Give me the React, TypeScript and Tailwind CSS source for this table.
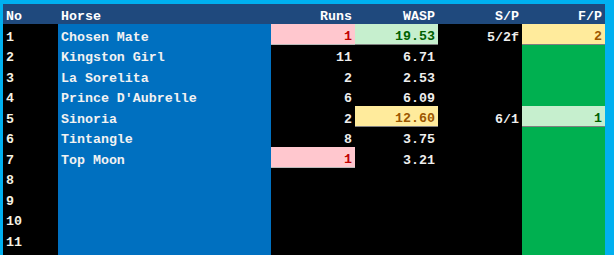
import React from "react";

type Tone = "pink" | "green" | "yellow" | "";

type Row = {
  no: number | "";
  horse: string;
  runs: string;
  runsTone?: Tone;
  wasp: string;
  waspTone?: Tone;
  sp: string;
  fp: string;
  fpTone?: Tone;
};

const rows: Row[] = [
  { no: 1, horse: "Chosen Mate", runs: "1", runsTone: "pink", wasp: "19.53", waspTone: "green", sp: "5/2f", fp: "2", fpTone: "yellow" },
  { no: 2, horse: "Kingston Girl", runs: "11", wasp: "6.71", sp: "", fp: "" },
  { no: 3, horse: "La Sorelita", runs: "2", wasp: "2.53", sp: "", fp: "" },
  { no: 4, horse: "Prince D'Aubrelle", runs: "6", wasp: "6.09", sp: "", fp: "" },
  { no: 5, horse: "Sinoria", runs: "2", wasp: "12.60", waspTone: "yellow", sp: "6/1", fp: "1", fpTone: "green" },
  { no: 6, horse: "Tintangle", runs: "8", wasp: "3.75", sp: "", fp: "" },
  { no: 7, horse: "Top Moon", runs: "1", runsTone: "pink", wasp: "3.21", sp: "", fp: "" },
  { no: 8, horse: "", runs: "", wasp: "", sp: "", fp: "" },
  { no: 9, horse: "", runs: "", wasp: "", sp: "", fp: "" },
  { no: 10, horse: "", runs: "", wasp: "", sp: "", fp: "" },
  { no: 11, horse: "", runs: "", wasp: "", sp: "", fp: "" },
  { no: "", horse: "", runs: "", wasp: "", sp: "", fp: "" },
];

const toneClass = (tone: Tone | undefined, base: string) => {
  if (tone === "pink") return "bg-[#ffc7ce] text-[#c00000] border-b border-[#b9b9b9]";
  if (tone === "green") return "bg-[#c6efce] text-[#006100] border-b border-[#7f7f7f]";
  if (tone === "yellow") return "bg-[#ffeb9c] text-[#9c5700] border-b border-[#7f7f7f]";
  return base;
};

const Cell = ({
  children,
  className,
  right,
}: {
  children?: React.ReactNode;
  className: string;
  right?: boolean;
}) => (
  <div
    className={`h-[20.5px] flex items-center pt-[6px] whitespace-pre ${
      right ? "justify-end pr-[3px]" : "pl-[3px]"
    } ${className}`}
  >
    {children}
  </div>
);

const App = () => {
  return (
    <div
      className="w-[614px] h-[255px] overflow-hidden bg-[#00b0f0] pt-[4px] pl-[3px] pr-[9px] text-[13.3px] font-bold leading-none"
      style={{ fontFamily: '"Liberation Mono", "Courier New", monospace' }}
    >
      <div className="grid grid-cols-[55px_213px_84px_83px_84px_83px]">
        <Cell className="h-[20px] bg-[#1f497d] text-white">No</Cell>
        <Cell className="h-[20px] bg-[#1f497d] text-white">Horse</Cell>
        <Cell right className="h-[20px] bg-[#1f497d] text-white">Runs</Cell>
        <Cell right className="h-[20px] bg-[#1f497d] text-white">WASP</Cell>
        <Cell right className="h-[20px] bg-[#1f497d] text-white">S/P</Cell>
        <Cell right className="h-[20px] bg-[#1f497d] text-white">F/P</Cell>

        {rows.map((r, i) => (
          <React.Fragment key={i}>
            <Cell className="bg-black text-[#f5f3e6]">{r.no}</Cell>
            <Cell className="bg-[#0070c0] text-[#f2f2f2]">{r.horse}</Cell>
            <Cell right className={toneClass(r.runsTone, "bg-black text-[#eeeeee]")}>
              {r.runs}
            </Cell>
            <Cell right className={toneClass(r.waspTone, "bg-black text-[#eeeeee]")}>
              {r.wasp}
            </Cell>
            <Cell right className="bg-black text-[#eeeeee]">
              {r.sp}
            </Cell>
            <Cell right className={toneClass(r.fpTone, "bg-[#00b050] text-[#eeeeee]")}>
              {r.fp}
            </Cell>
          </React.Fragment>
        ))}
      </div>
    </div>
  );
};

export default App;
